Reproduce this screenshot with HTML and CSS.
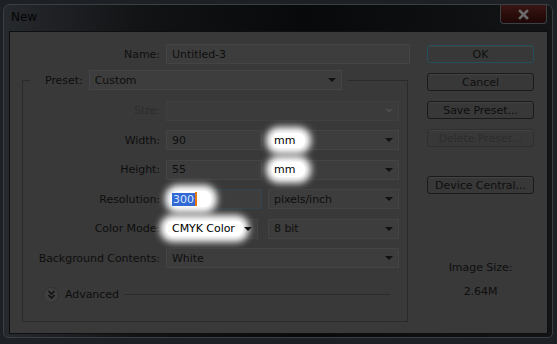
FILE: index.html
```html
<!DOCTYPE html>
<html>
<head>
  <meta charset="UTF-8">
  <title>New</title>
  <link rel="stylesheet" href="styles.css">
</head>
<body>
  <div class="window">
    <div class="titlebar">
      <span class="title">New</span>
      <span class="btn__close">
        <svg width="11" height="11" viewBox="0 0 11 11"><path d="M2 2 L9 9 M9 2 L2 9" stroke="#6a6a6a" stroke-width="2.6" stroke-linecap="square"/></svg>
      </span>
    </div>
    <div class="client">
      <div class="form">
        <div class="row row--name">
          <span class="label">Name:</span>
          <div class="field">Untitled-3</div>
        </div>
        <fieldset class="group">
          <legend class="legend">
            <span class="legend__label">Preset:</span>
            <div class="field select select--preset">Custom<i class="arrow"></i></div>
          </legend>
          <div class="row">
            <span class="label label--disabled">Size:</span>
            <div class="field select select--full select--disabled"><i class="arrow"></i></div>
          </div>
          <div class="row">
            <span class="label">Width:</span>
            <div class="field">90</div>
            <div class="field select"><span class="glow glow--mm">mm</span><i class="arrow"></i></div>
          </div>
          <div class="row">
            <span class="label">Height:</span>
            <div class="field">55</div>
            <div class="field select"><span class="glow glow--mm">mm</span><i class="arrow"></i></div>
          </div>
          <div class="row">
            <span class="label">Resolution:</span>
            <div class="field field--focus"><span class="glow glow--res"><span class="sel">300</span><i class="caret"></i></span></div>
            <div class="field select">pixels/inch<i class="arrow"></i></div>
          </div>
          <div class="row">
            <span class="label">Color Mode:</span>
            <div class="field select select--mode"><span class="glow glow--mode">CMYK Color</span><i class="arrow"></i></div>
            <div class="field select">8 bit<i class="arrow"></i></div>
          </div>
          <div class="row">
            <span class="label">Background Contents:</span>
            <div class="field select select--full">White<i class="arrow"></i></div>
          </div>
          <div class="advanced">
            <span class="advanced__icon">
              <svg width="9" height="9" viewBox="0 0 9 9"><path d="M1.5 1 L4.5 4 L7.5 1 M1.5 5 L4.5 8 L7.5 5" fill="none" stroke="#111" stroke-width="1.6"/></svg>
            </span>
            <span class="advanced__text">Advanced</span>
            <span class="advanced__line"></span>
          </div>
        </fieldset>
      </div>
      <div class="buttons">
        <div class="btn btn--ok">OK</div>
        <div class="btn">Cancel</div>
        <div class="btn">Save Preset...</div>
        <div class="btn btn--disabled">Delete Preset...</div>
        <div class="btn btn--device">Device Central...</div>
        <div class="info info--first">Image Size:</div>
        <div class="info">2.64M</div>
      </div>
    </div>
  </div>
</body>
</html>
```

FILE: styles.css
```css
* {
  box-sizing: border-box;
}
body {
  margin: 0;
  width: 557px;
  height: 344px;
  overflow: hidden;
  background: #1d2125;
  font-family: "DejaVu Sans", sans-serif;
  font-size: 11px;
  letter-spacing: -0.05px;
  color: #0e0e0e;
}
/* window frame */
.window {
  margin: 4px 0 0 3px;
  width: 550px;
  height: 334px;
  border: 1px solid #3b3e42;
  border-radius: 7px 7px 5px 5px;
  background: linear-gradient(to right, #26292d 0%, #121315 25%, #08090a 55%, #121416 100%);
  padding: 0 4px 3px 5px;
  display: flex;
  flex-direction: column;
}
.titlebar {
  height: 26px;
  display: flex;
  justify-content: space-between;
  align-items: flex-start;
}
.title {
  margin: 5px 0 0 2px;
  font-size: 12px;
  line-height: 14px;
  letter-spacing: 0;
  color: #050505;
}
.btn__close {
  width: 47px;
  height: 19px;
  margin-right: 1px;
  border: 1px solid #3c3f43;
  border-top: none;
  border-radius: 0 0 4px 4px;
  background: linear-gradient(#3a1613, #280c0a 60%, #1d0707);
  display: flex;
  align-items: center;
  justify-content: center;
}
/* dialog body */
.client {
  flex: 1;
  border: 1px solid #0f0f0f;
  background: #393939;
  display: flex;
  padding: 12px 0 0 12px;
}
.form {
  width: 388px;
}
.row {
  display: grid;
  grid-template-columns: 137px 96px 131px;
  column-gap: 6px;
  height: 20px;
  margin-top: 9.5px;
}
.row--name {
  grid-template-columns: 138px 244px;
  margin-top: 0;
}
.label {
  text-align: right;
  align-self: center;
  white-space: nowrap;
}
.label--disabled {
  color: #2d2d2d;
}
.field {
  height: 20px;
  background: #3d3d3d;
  border: 1px solid #444;
  padding: 0 5px;
  display: flex;
  align-items: center;
  white-space: nowrap;
}
.field--focus {
  border-color: #34444f;
}
.select {
  justify-content: space-between;
}
.select--full {
  grid-column: 2 / span 2;
}
.select--mode {
  width: 92px;
}
.select--preset {
  width: 253px;
}
.select--disabled {
  background: #3b3b3b;
  border-color: #404040;
}
.arrow {
  width: 0;
  height: 0;
  margin-left: auto;
  border-left: 4px solid transparent;
  border-right: 4px solid transparent;
  border-top: 4px solid #111;
}
.select--disabled .arrow {
  border-top-color: #4a4a4a;
}
/* preset group box */
.group {
  margin: 6px 0 0 0;
  width: 386px;
  min-width: 0;
  border: 1px solid #2a2a2a;
  padding: 10.5px 0 18px 0;
}
.group .row:first-of-type {
  margin-top: 0;
}
.legend {
  display: flex;
  align-items: center;
  gap: 6px;
  margin-left: 7px;
  padding: 0 6px 0 15px;
}
.advanced {
  display: flex;
  align-items: center;
  height: 16px;
  margin: 18.5px 17px 0 20px;
}
.advanced__icon {
  width: 16px;
  height: 16px;
  border-radius: 50%;
  background: #3f3f3f;
  border: 1px solid #333;
  display: flex;
  align-items: center;
  justify-content: center;
}
.advanced__text {
  margin-left: 6px;
}
.advanced__line {
  flex: 1;
  height: 1px;
  margin-left: 6px;
  background: #2a2a2a;
}
/* the white highlights */
.glow {
  display: inline-flex;
  align-items: center;
  background: #fff;
  color: #000;
  border-radius: 7px;
  box-shadow: 0 0 7px 6px #fff;
}
.glow--mm {
  padding: 1px 10px 1px 2px;
  margin: -1px -10px -1px -2px;
}
.glow--res {
  padding: 1px 14px 1px 1px;
  margin: -1px -14px -1px -1px;
}
.glow--mode {
  padding: 1px 8px 1px 6px;
  margin: -1px -8px -1px -6px;
}
.sel {
  background: #3168d2;
  color: #d8e4ff;
  padding: 0 1px;
}
.caret {
  width: 2px;
  height: 14px;
  background: #e8780c;
}
/* buttons column */
.buttons {
  margin-left: 17px;
  width: 107px;
  padding-top: 1px;
  display: flex;
  flex-direction: column;
  gap: 10px;
}
.btn {
  height: 18px;
  border: 1px solid #1a1a1a;
  border-radius: 3px;
  background: #383838;
  box-shadow: inset 0 1px 0 #434343;
  display: flex;
  align-items: center;
  justify-content: center;
  white-space: nowrap;
}
.btn--ok {
  border-color: #24505c;
}
.btn--disabled {
  color: #2d2d2d;
  border-color: #2f2f2f;
}
.btn--device {
  margin-top: 19px;
}
.info {
  line-height: 14px;
  text-align: center;
}
.info--first {
  margin-top: 57px;
}
```
